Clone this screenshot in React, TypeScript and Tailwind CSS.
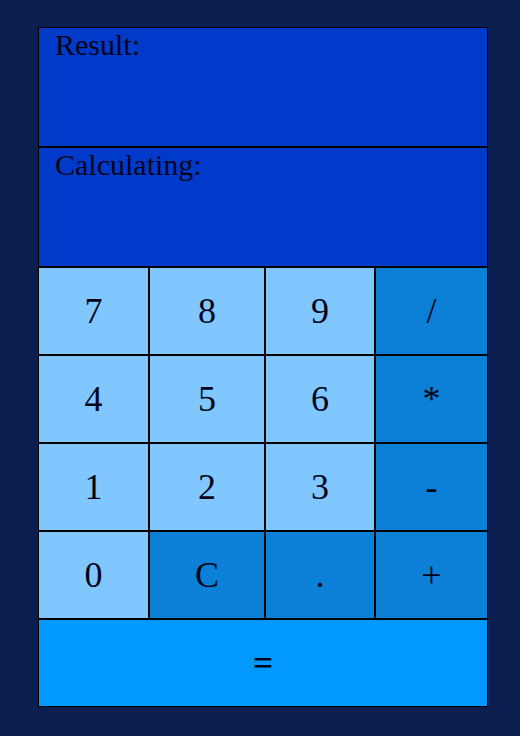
import React from "react";

const light = "bg-[#80c6ff]";
const op = "bg-[#0c80d6]";

const keys: { label: string; cls: string }[] = [
  { label: "7", cls: light },
  { label: "8", cls: light },
  { label: "9", cls: light },
  { label: "/", cls: op },
  { label: "4", cls: light },
  { label: "5", cls: light },
  { label: "6", cls: light },
  { label: "*", cls: op },
  { label: "1", cls: light },
  { label: "2", cls: light },
  { label: "3", cls: light },
  { label: "-", cls: op },
  { label: "0", cls: light },
  { label: "C", cls: op },
  { label: ".", cls: op },
  { label: "+", cls: op },
];

export default function App() {
  return (
    <div
      className="w-[520px] h-[736px] bg-[#0a1f50] pt-[27px] pl-[38px]"
      style={{ fontFamily: '"Liberation Serif", "Times New Roman", serif' }}
    >
      <div className="w-[450px] border border-black bg-black flex flex-col gap-[2px] text-[#02051a]">
        <div className="h-[118px] bg-[#003acb] pl-4 pt-[2px] text-[30px] leading-none">
          Result:
        </div>
        <div className="h-[118px] bg-[#003acb] pl-4 pt-[2px] text-[30px] leading-none">
          Calculating:
        </div>
        <div className="grid grid-cols-[109px_114px_108px_111px] auto-rows-[86px] gap-[2px]">
          {keys.map((k) => (
            <div
              key={k.label}
              className={`${k.cls} flex items-center justify-center text-[36px]`}
            >
              {k.label}
            </div>
          ))}
        </div>
        <div className="h-[86px] bg-[#0099ff] flex items-center justify-center text-[36px] font-bold">
          =
        </div>
      </div>
    </div>
  );
}
